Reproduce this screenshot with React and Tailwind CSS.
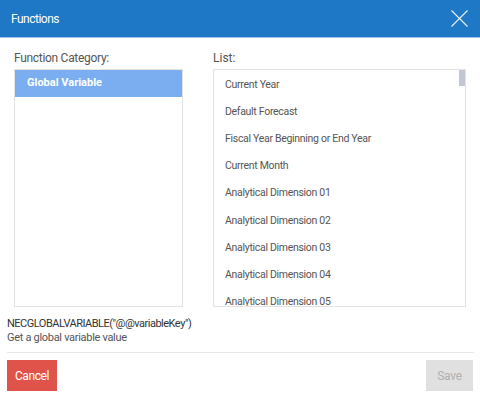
import React from "react";

const items = [
  "Current Year",
  "Default Forecast",
  "Fiscal Year Beginning or End Year",
  "Current Month",
  "Analytical Dimension 01",
  "Analytical Dimension 02",
  "Analytical Dimension 03",
  "Analytical Dimension 04",
  "Analytical Dimension 05",
];

export default function App() {
  return (
    <div
      className="w-[480px] h-[397px] bg-white flex flex-col overflow-hidden"
      style={{ fontFamily: "Roboto, 'Liberation Sans', sans-serif" }}
    >
      <div className="h-[38px] bg-[#1e78c6] border-b border-[#9cc4ec] flex items-center justify-between pl-[11px] pr-[12px] shrink-0">
        <span className="text-white text-[12px] leading-[14px] tracking-[-0.5px]">Functions</span>
        <svg width="17" height="17" viewBox="0 0 17 17" className="mt-[-1px]">
          <path d="M0.5 0.5 L16.5 16.5 M16.5 0.5 L0.5 16.5" stroke="#e6f0fa" strokeWidth="1.1" fill="none" />
        </svg>
      </div>
      <div className="px-[7px] flex flex-col">
        <div className="flex pl-[7px] pt-[13px]">
          <div className="w-[169px] flex flex-col">
            <div className="text-[12px] leading-[14px] text-[#555] tracking-[-0.3px] mb-[4px]">Function Category:</div>
            <div className="h-[238px] border border-[#e3e3e3]">
              <div className="h-[27px] bg-[#7aaef0] flex items-center pl-[12px] text-white text-[11px] font-bold tracking-[0px]">
                Global Variable
              </div>
            </div>
          </div>
          <div className="w-[253px] ml-[30px] flex flex-col">
            <div className="text-[12px] leading-[14px] text-[#555] mb-[4px]">List:</div>
            <div className="relative h-[238px] border border-[#e3e3e3] overflow-hidden pt-[1px]">
              {items.map((t) => (
                <div key={t} className="h-[27.2px] flex items-center pl-[11px] text-[10.5px] text-[#555] tracking-[-0.3px]">
                  {t}
                </div>
              ))}
              <div className="absolute right-[0px] top-0 w-[6px] h-[16px] bg-[#c3c6d3]" />
            </div>
          </div>
        </div>
        <div className="mt-[10px] text-[11px] leading-[14px] text-[#333] tracking-[-0.5px]">NECGLOBALVARIABLE("@@variableKey")</div>
        <div className="text-[11px] leading-[14px] text-[#555] tracking-[-0.3px]">Get a global variable value</div>
        <div className="mt-[7px] border-t border-[#e8e8e8] w-[467px]" />
        <div className="flex justify-between pt-[7px] w-[466px]">
          <button className="w-[50px] h-[31px] bg-[#e0534a] text-white text-[12px] tracking-[-0.4px]">Cancel</button>
          <button className="w-[47px] h-[31px] bg-[#e0e0e0] text-[#b0b0b0] text-[12px] tracking-[-0.3px]">Save</button>
        </div>
      </div>
    </div>
  );
}
